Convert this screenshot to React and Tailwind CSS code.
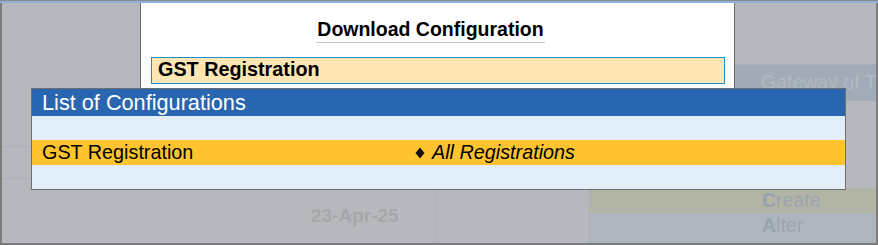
import React from 'react';

const font = { fontFamily: '"Liberation Sans", Arial, sans-serif' };

const Diamond = () => (
    <svg width="10" height="12" viewBox="0 0 10 12" className="shrink-0">
        <polygon points="5,0.5 9.5,6 5,11.5 0.5,6" fill="#111" />
    </svg>
);

const MenuItem = ({ hot, rest, active }) => (
    <div className={`h-[25px] shrink-0 flex items-center pl-[172px] text-[19.5px] leading-none whitespace-nowrap ${active ? 'bg-[#b2b4a6]' : ''}`}>
        <span className="font-bold text-[#97a2ad]">{hot}</span>
        <span className="text-[#9ba5af]">{rest}</span>
    </div>
);

const App = () => {
    return (
        <div className="w-[878px] h-[245px] relative overflow-hidden bg-[#b5b9bd]" style={font}>
            {/* screen frame */}
            <div className="h-[3px] border-t border-[#8a8a8a] bg-[#8db3da]" />
            <div className="flex h-[242px] border-x-2 border-b-2 border-[#7c7c7c]">
                {/* left pane behind the popups */}
                <div className="w-[587px] flex flex-col overflow-hidden">
                    <div className="h-[143px] shrink-0" />
                    <div className="h-[32px] shrink-0 border-t border-[#a4b3bf]" />
                    <div className="h-[12px] shrink-0 border-t border-[#a4b3bf]" />
                    <div className="flex flex-1">
                        <div className="w-[434px] border-r border-[#adb2b7] flex items-center pl-[309px] pb-[2px]">
                            <span className="font-bold text-[19px] text-[#a4a8ac] leading-none">23-Apr-25</span>
                        </div>
                        <div className="flex-1" />
                    </div>
                </div>

                {/* gateway pane */}
                <div className="flex-1 flex flex-col overflow-hidden">
                    <div className="h-[61px] shrink-0" />
                    <div className="h-[37px] shrink-0 bg-[#a1acb8] border-t border-[#aab3bc] flex items-center pl-[172px] whitespace-nowrap">
                        <span className="text-[19.5px] text-[#b1b8be] leading-none">Gateway of Tally</span>
                    </div>
                    <div className="h-[87px] shrink-0" />
                    <div className="flex-1 flex flex-col border-l border-[#a9b1b8] bg-[#aeb5bd]">
                        <MenuItem hot="C" rest="reate" active />
                        <MenuItem hot="A" rest="lter" />
                    </div>
                </div>
            </div>

            {/* Download Configuration dialog */}
            <div className="absolute left-[140px] top-[3px] w-[595px] h-[187px] bg-white border-x border-[#6d6d6d]">
                <div className="flex justify-center pt-[17px] pr-[14px]">
                    <span className="font-bold text-[19.5px] text-black leading-none pb-[2px] border-b border-[#c8c8c8] px-[1px]">
                        Download Configuration
                    </span>
                </div>
                <div className="ml-[10px] mr-[9px] mt-[14px] h-[27px] bg-[#fde6b3] border border-[#1b8fcb] flex items-center pl-[6px]">
                    <span className="font-bold text-[19.8px] text-black leading-none">GST Registration</span>
                </div>
            </div>

            {/* List of Configurations popup */}
            <div className="absolute left-[31px] top-[88px] w-[815px] h-[102px] border border-[#6e6e6e] bg-[#e2eff9] flex flex-col">
                <div className="h-[27px] shrink-0 bg-[#2966b0] flex items-center pl-[10px]">
                    <span className="text-white text-[21.7px] leading-none">List of Configurations</span>
                </div>
                <div className="h-[24px] shrink-0" />
                <div className="h-[25px] shrink-0 bg-[#fec42f] flex items-center text-[19.8px] text-black leading-none">
                    <span className="w-[383px] pl-[10px]">GST Registration</span>
                    <Diamond />
                    <span className="italic ml-[7px]">All Registrations</span>
                </div>
                <div className="flex-1" />
            </div>
        </div>
    );
};

export default App;
